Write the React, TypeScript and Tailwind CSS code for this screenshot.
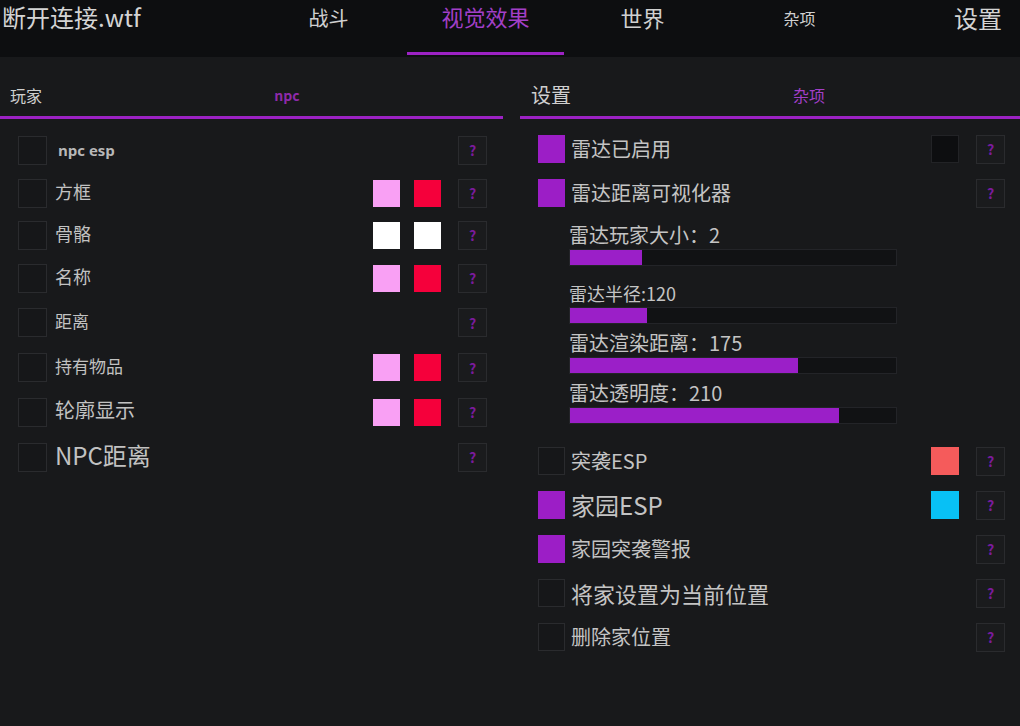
import React from 'react';

const font = { fontFamily: '"Noto Sans CJK SC", "Noto Sans", sans-serif' };

type LeftRow = { label: string; size: string; h: string; colors?: string[]; bold?: boolean };

const leftRows: LeftRow[] = [
  { label: 'npc esp', size: 'text-[15px]', h: 'h-[44px]', bold: true },
  { label: '方框', size: 'text-[18px]', h: 'h-[42px]', colors: ['bg-[#f9a0f4]', 'bg-[#f5003b]'] },
  { label: '骨骼', size: 'text-[18px]', h: 'h-[42px]', colors: ['bg-white', 'bg-white'] },
  { label: '名称', size: 'text-[18px]', h: 'h-[44px]', colors: ['bg-[#f9a0f4]', 'bg-[#f5003b]'] },
  { label: '距离', size: 'text-[17px]', h: 'h-[45px]' },
  { label: '持有物品', size: 'text-[17px]', h: 'h-[45px]', colors: ['bg-[#f9a0f4]', 'bg-[#f5003b]'] },
  { label: '轮廓显示', size: 'text-[20px]', h: 'h-[44px]', colors: ['bg-[#f9a0f4]', 'bg-[#f5003b]'] },
  { label: 'NPC距离', size: 'text-[24px]', h: 'h-[46px]' },
];

type RightRow = { label: string; size: string; on: boolean; color?: string };

const topRows: RightRow[] = [
  { label: '雷达已启用', size: 'text-[20px]', on: true, color: 'bg-[#0d0e10]' },
  { label: '雷达距离可视化器', size: 'text-[20px]', on: true },
];

const bottomRows: RightRow[] = [
  { label: '突袭ESP', size: 'text-[20px]', on: false, color: 'bg-[#f55b5b]' },
  { label: '家园ESP', size: 'text-[24px]', on: true, color: 'bg-[#08c0f5]' },
  { label: '家园突袭警报', size: 'text-[20px]', on: true },
  { label: '将家设置为当前位置', size: 'text-[22px]', on: false },
  { label: '删除家位置', size: 'text-[20px]', on: false },
];

const sliders = [
  { label: '雷达玩家大小：2', size: 'text-[20px]', fill: 72, mt: 'mt-[6px]' },
  { label: '雷达半径:120', size: 'text-[18px]', fill: 77, mt: 'mt-[13px]' },
  { label: '雷达渲染距离：175', size: 'text-[20px]', fill: 228, mt: 'mt-[5px]' },
  { label: '雷达透明度：210', size: 'text-[20px]', fill: 269, mt: 'mt-[5px]' },
];

function Help() {
  return (
    <div className="w-[29px] h-[29px] border border-[#2a2b2e] bg-[#1a1b1d] flex items-center justify-center">
      <span className="text-[14px] font-bold text-[#7a1b9c] leading-none">?</span>
    </div>
  );
}

function Check({ on, size }: { on: boolean; size: string }) {
  return (
    <div
      className={
        size +
        ' shrink-0 ' +
        (on ? 'bg-[#9c1ec6]' : 'border border-[#2a2b2e] bg-[#161719]')
      }
    />
  );
}

function RightRowItem({ row }: { row: RightRow }) {
  return (
    <div className="h-[44px] flex items-center pl-[18px] pr-[15px]">
      <Check on={row.on} size="w-[27px] h-[28px]" />
      <span className={'ml-[6px] text-[#c4c4c4] ' + row.size}>{row.label}</span>
      <div className="flex-1" />
      {row.color && (
        <div
          className={
            'w-[28px] h-[28px] mr-[17px] ' +
            row.color +
            (row.color === 'bg-[#0d0e10]' ? ' border border-[#222326]' : '')
          }
        />
      )}
      <Help />
    </div>
  );
}

export default function App() {
  return (
    <div className="w-[1020px] h-[726px] bg-[#18191b] overflow-hidden" style={font}>
      {/* top tabs */}
      <div className="h-[57px] bg-[#0d0e10] flex">
        <div className="w-[250px] pl-[2px] pt-[1px] text-[24px] text-[#d4d4d4] leading-[32px]">断开连接.wtf</div>
        <div className="w-[157px] text-center pt-[4px] text-[20px] text-[#d0d0d0] leading-[28px]">战斗</div>
        <div className="w-[157px] flex flex-col items-center">
          <div className="pt-[1px] text-[22px] text-[#a23fc7] leading-[30px]">视觉效果</div>
          <div className="flex-1" />
          <div className="w-full h-[3px] bg-[#9c22c4] mb-[2px]" />
        </div>
        <div className="w-[157px] text-center pt-[2px] text-[22px] text-[#d0d0d0] leading-[30px]">世界</div>
        <div className="w-[157px] text-center pt-[6px] text-[16px] text-[#d0d0d0] leading-[24px]">杂项</div>
        <div className="flex-1 text-right pr-[18px] pt-[2px] text-[24px] text-[#d4d4d4] leading-[32px]">设置</div>
      </div>

      <div className="flex gap-[17px]">
        {/* left panel */}
        <div className="w-[503px]">
          <div className="h-[62px] flex flex-col">
            <div className="flex items-center pt-[25px]">
              <div className="w-[230px] pl-[10px] text-[16px] text-[#cfcfcf] leading-[26px]">玩家</div>
              <div className="w-[114px] text-center text-[14px] font-bold text-[#8e2aaa] leading-[26px]">npc</div>
            </div>
            <div className="flex-1" />
            <div className="h-[3px] bg-[#9c22c4]" />
          </div>
          <div className="pt-[9px]">
            {leftRows.map((r) => (
              <div key={r.label} className={'flex items-center pl-[18px] pr-[16px] ' + r.h}>
                <Check on={false} size="w-[29px] h-[29px]" />
                <span
                  className={
                    (r.bold ? 'ml-[11px] font-bold text-[#b8b8b8] ' : 'ml-[8px] -mt-[4px] text-[#c2c2c2] ') + r.size
                  }
                  style={r.bold ? { fontFamily: '"Open Sans", "Noto Sans", sans-serif' } : undefined}
                >
                  {r.label}
                </span>
                <div className="flex-1" />
                {r.colors && (
                  <div className="flex gap-[14px] mr-[17px]">
                    {r.colors.map((c, i) => (
                      <div key={i} className={'w-[27px] h-[27px] ' + c} />
                    ))}
                  </div>
                )}
                <Help />
              </div>
            ))}
          </div>
        </div>

        {/* right panel */}
        <div className="flex-1">
          <div className="h-[62px] flex flex-col">
            <div className="flex items-center pt-[24px]">
              <div className="w-[230px] pl-[11px] text-[20px] text-[#cfcfcf] leading-[28px]">设置</div>
              <div className="w-[118px] text-center text-[16px] text-[#a23fc7] leading-[28px]">杂项</div>
            </div>
            <div className="flex-1" />
            <div className="h-[3px] bg-[#9c22c4]" />
          </div>
          <div className="pt-[8px]">
            {topRows.map((r) => (
              <RightRowItem key={r.label} row={r} />
            ))}
            {sliders.map((s) => (
              <div key={s.label} className={'pl-[49px] ' + s.mt}>
                <div className={'h-[28px] flex items-center text-[#c4c4c4] ' + s.size}>{s.label}</div>
                <div className="w-[328px] h-[17px] bg-[#111214] border border-[#232428]">
                  <div className="h-full bg-[#9b1fc8]" style={{ width: s.fill }} />
                </div>
              </div>
            ))}
            <div className="mt-[15px]">
              {bottomRows.map((r) => (
                <RightRowItem key={r.label} row={r} />
              ))}
            </div>
          </div>
        </div>
      </div>
    </div>
  );
}
